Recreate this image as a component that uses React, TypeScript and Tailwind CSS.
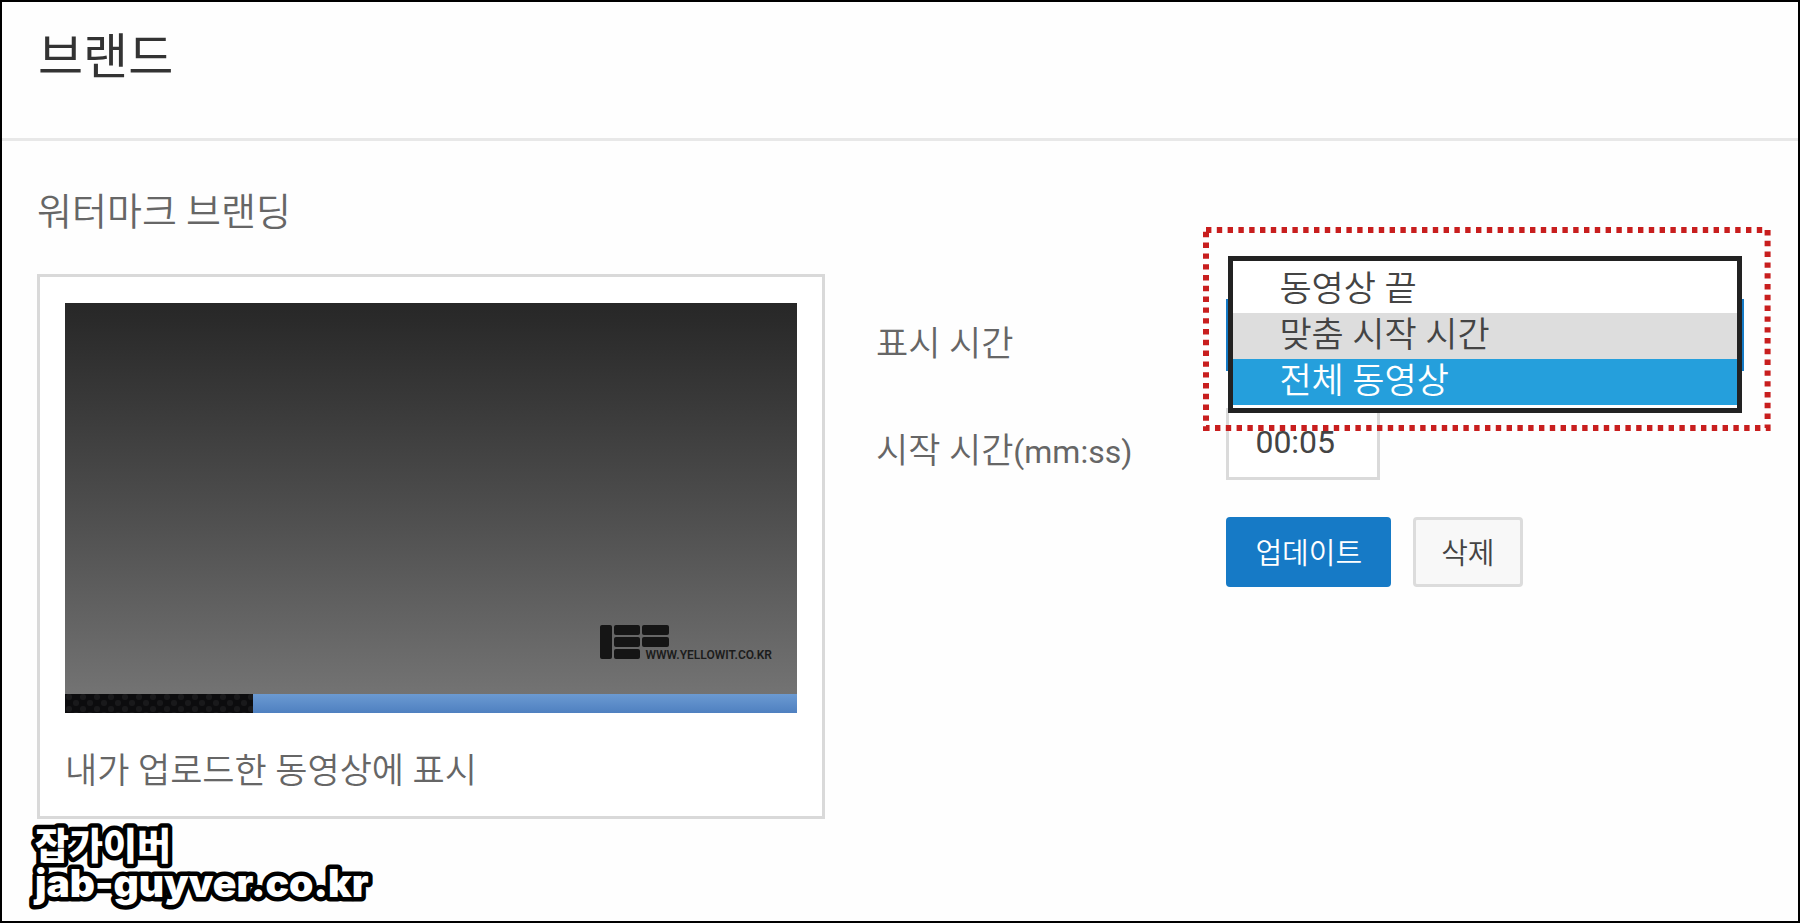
import { useState } from "react"

const displayTimes = [
  { value: "end", label: "동영상 끝" },
  { value: "custom", label: "맞춤 시작 시간" },
  { value: "all", label: "전체 동영상" },
]

function BrandLogo() {
  return (
    <svg viewBox="0 0 69 34" className="h-[34px] w-[69px] shrink-0 fill-[#151515]" aria-hidden="true">
      <rect x="0" y="0" width="12" height="34" rx="2" />
      <rect x="14" y="0" width="26" height="10" rx="2" />
      <rect x="14" y="12" width="26" height="10" rx="2" />
      <rect x="14" y="24" width="26" height="10" rx="2" />
      <rect x="42" y="0" width="27" height="10" rx="2" />
      <rect x="42" y="12" width="27" height="10" rx="2" />
    </svg>
  )
}

function VideoPreview() {
  return (
    <div className="relative flex aspect-[731/409] flex-col bg-linear-to-b from-[#272727] to-[#777777]">
      <div className="flex-1" />
      {/* Watermark */}
      <div className="absolute right-[25px] bottom-[54px] flex items-end">
        <BrandLogo />
        <span className="-mb-[3px] -ml-[24px] text-[12px] leading-[14px] font-semibold text-[#1c1c1c]">
          WWW.YELLOWIT.CO.KR
        </span>
      </div>
      {/* Progress bar */}
      <div className="flex h-[19px] bg-linear-to-b from-[#6b9ad2] to-[#4f80c0]">
        <svg className="h-full w-[188px]" aria-hidden="true">
          <defs>
            <pattern id="carbon" width="14" height="12" patternUnits="userSpaceOnUse">
              <rect width="14" height="12" fill="#0c0c0e" />
              <circle cx="4" cy="3" r="3" fill="#19191b" />
              <circle cx="11" cy="9" r="3" fill="#19191b" />
            </pattern>
          </defs>
          <rect width="100%" height="100%" fill="url(#carbon)" />
        </svg>
      </div>
    </div>
  )
}

function DisplayTimeSelect({ value, onChange }: { value: string; onChange: (value: string) => void }) {
  return (
    <div className="relative">
      <select
        id="display-time"
        value={value}
        onChange={(e) => onChange(e.target.value)}
        className="h-[72px] w-full appearance-none border-2 border-[#167ac6] bg-white px-[50px] text-[35px] text-[#444]"
      >
        {displayTimes.map((t) => (
          <option key={t.value} value={t.value}>{t.label}</option>
        ))}
      </select>

      {/* Open list */}
      <ul role="listbox" aria-label="표시 시간" className="absolute inset-x-[2px] -top-[43px] z-10 border-[5px] border-[#222] bg-white pt-[6px] pb-[3px] text-[35px] leading-[46px] font-[350] text-[#444]">
        {displayTimes.map((t) => (
          <li
            key={t.value}
            role="option"
            aria-selected={t.value === value}
            onClick={() => onChange(t.value)}
            className={
              t.value === "all"
                ? "bg-[#259fdc] px-[46px] text-white"
                : t.value === "custom"
                  ? "bg-[#dddddd] px-[46px]"
                  : "px-[46px]"
            }
          >
            {t.label}
          </li>
        ))}
      </ul>

      {/* Highlight frame */}
      <svg className="pointer-events-none absolute -top-[72px] -left-[23px] z-20 h-[204px] w-[calc(100%+50px)] overflow-visible" aria-hidden="true">
        <rect x="3" y="3" width="calc(100% - 6px)" height="198" fill="none" stroke="#c81e1e" strokeWidth="6" strokeDasharray="5.4 5.4" />
      </svg>
    </div>
  )
}

function SiteMark() {
  return (
    <svg
      className="h-[94px] w-[400px] overflow-visible fill-white stroke-black stroke-[9px] font-black [paint-order:stroke_fill] [stroke-linejoin:round]"
      role="img"
      aria-label="잡가이버 jab-guyver.co.kr"
    >
      <text x="5" y="41" className="font-['Noto_Sans_CJK_KR',sans-serif] text-[37px]">잡가이버</text>
      <text x="5" y="78" className="font-[Inter,sans-serif] text-[39px]">jab-guyver.co.kr</text>
    </svg>
  )
}

export default function App() {
  const [displayTime, setDisplayTime] = useState("custom")
  const [startTime, setStartTime] = useState("00:05")

  return (
    <div className="min-h-screen border-2 border-black bg-[#fefefe] font-[Roboto,'Noto_Sans_CJK_KR',sans-serif] text-[#666]">
      <header className="border-b-[3px] border-[#e8e8e8] px-[36px] pt-[32px] pb-[56px]">
        <h1 className="text-[49px] leading-[48px] text-[#333]">브랜드</h1>
      </header>

      <main className="pr-[54px] pl-[35px] pt-[52px]">
        <h2 className="mb-[43px] text-[38px] leading-[38px] font-[350]">워터마크 브랜딩</h2>

        <div className="grid grid-cols-[788fr_868fr] items-start gap-[51px]">
          {/* Preview card */}
          <figure className="border-[3px] border-[#d9d9d9] bg-white px-[25px] pt-[26px] pb-[24px]">
            <VideoPreview />
            <figcaption className="mt-[39px] text-[35px] leading-[40px] font-[350]">내가 업로드한 동영상에 표시</figcaption>
          </figure>

          {/* Settings */}
          <form className="grid grid-cols-[350fr_517fr] items-center gap-y-[37px] pt-[25px]" onSubmit={(e) => e.preventDefault()}>
            <label htmlFor="display-time" className="pt-5 text-[35px] leading-[40px] font-[350]">표시 시간</label>
            <DisplayTimeSelect value={displayTime} onChange={setDisplayTime} />

            <label htmlFor="start-time" className="pt-4 text-[35px] leading-[40px] font-[350]">
              시작 시간<span className="text-[32px] font-normal">(mm:ss)</span>
            </label>
            <input
              id="start-time"
              type="text"
              value={startTime}
              onChange={(e) => setStartTime(e.target.value)}
              className="h-[72px] w-[154px] border-[3px] border-[#dadada] bg-white px-[26px] pb-1 text-[32px] text-[#444]"
            />

            <div className="col-start-2 flex gap-[22px]">
              <button type="submit" className="h-[70px] rounded-[4px] bg-[#167ac6] px-[29px] pt-[6px] text-[29px] font-[350] text-white">업데이트</button>
              <button type="button" className="h-[70px] rounded-[4px] border-[3px] border-[#dcdcdc] bg-[#f8f8f8] px-[25px] pt-[6px] text-[29px] font-[350] text-[#444]">삭제</button>
            </div>
          </form>
        </div>
      </main>

      <footer className="px-[28px]">
        <SiteMark />
      </footer>
    </div>
  )
}
